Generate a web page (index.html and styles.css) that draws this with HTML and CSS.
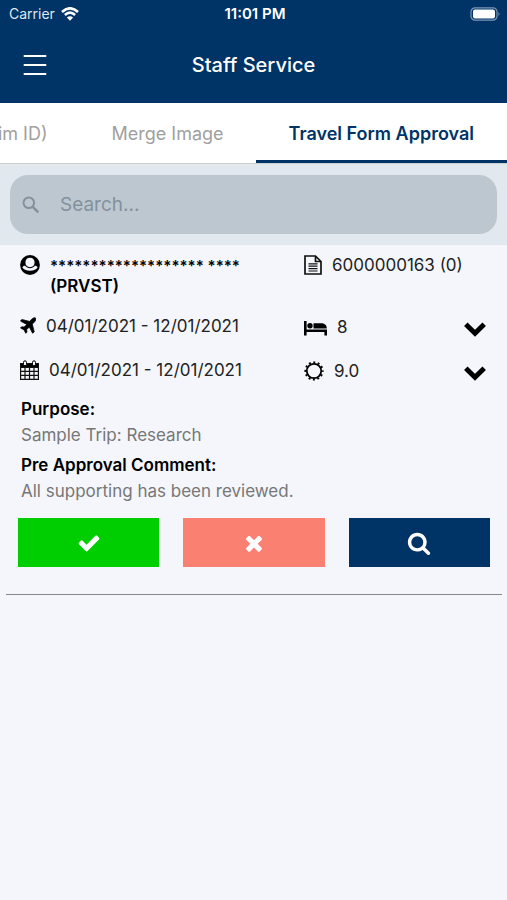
FILE: index.html
```html
<!DOCTYPE html>
<html lang="en">
<head>
<meta charset="utf-8">
<meta name="viewport" content="width=device-width, initial-scale=1">
<title>Staff Service</title>
<link rel="stylesheet" href="styles.css">
</head>
<body>
<header class="top">
  <div class="status">
    <div class="carrier">Carrier
      <svg width="18" height="14" viewBox="0 0 18 14" fill="none" stroke="#fff" stroke-width="2.6"><path d="M1 5Q9-2.4 17 5M3.900 8Q9 3.300 14.100 8"/><path d="M9 13.700 5.900 10.500Q9 7.900 12.100 10.500Z" fill="#fff" stroke="none"/></svg>
    </div>
    <div class="clock">11:01 PM</div>
    <svg class="battery" width="31" height="14" viewBox="0 0 31 14"><rect x="1" y=".8" width="26" height="12.400" rx="4" fill="none" stroke="#7d97b4" stroke-width="1.200"/><rect x="3" y="2.600" width="22" height="8.800" rx="2" fill="#fff"/><path d="M28.500 5q2 2 0 4z" fill="#7d97b4"/></svg>
  </div>
  <div class="bar">
    <button class="menu" aria-label="Menu"><svg width="24" height="22" viewBox="0 0 24 22" stroke="#fff" stroke-width="2" stroke-linecap="round"><path d="M1.500 2H22.500M1.500 11H22.500M1.500 20H22.500"/></svg></button>
    <h1>Staff Service</h1>
  </div>
</header>
<nav class="tabs">
  <a href="#claim">im ID)</a>
  <a href="#merge">Merge Image</a>
  <a href="#travel" class="active" aria-current="page">Travel Form Approval</a>
</nav>
<div class="search-area">
  <label class="search">
    <svg width="18" height="18" viewBox="0 0 18 18" fill="none" stroke="#84919c" stroke-width="2"><circle cx="6.800" cy="6.800" r="5.300"/><path d="m10.800 10.800 5.500 5.500" stroke-width="2.600"/></svg>
    <input type="search" placeholder="Search..." aria-label="Search">
  </label>
</div>
<main>
  <article class="card">
    <div class="row first">
      <div class="cell">
        <svg width="20" height="20" viewBox="0 0 20 20"><circle cx="10" cy="10" r="9.900"/><path d="M10 2.800c-2.800 0-4.600 2-4.600 4.800S7.300 12.300 10 12.300s4.600-1.900 4.600-4.700-1.800-4.800-4.600-4.800Z" fill="#f4f6fb"/><path d="M2.400 12.200c.8-1 1.600-1.400 2.700-1.400 1.200 1.600 2.900 2.500 4.900 2.500s3.700-.9 4.900-2.500c1.100 0 1.900.4 2.700 1.400-.9 2.100-3.900 3.600-7.600 3.600s-6.700-1.500-7.600-3.600Z" fill="#f4f6fb"/></svg>
        <strong><span class="masked">******************* ****</span><br>(PRVST)</strong>
      </div>
      <div class="cell"><svg width="18" height="20" viewBox="0 0 18 20" fill="none" stroke="#111"><path d="M1 1H11.500L17 6.500V19H1ZM11.500 1V6.500H17" stroke-width="1.700"/><path d="M4.500 8.800H13.500M4.500 11.200H13.500M4.500 13.600H13.500M4.500 16H13.500" stroke-width="1.200"/></svg><span>6000000163 (0)</span></div>
    </div>
    <div class="row">
      <div class="cell"><svg width="16" height="18" viewBox="0 -1.500 16 18"><path d="M15.500.5c.8.900 0 2.800-1.100 4l-2.100 2.100 1.900 7.800-1.600 1.300-3.300-6.200-2.700 2.600.4 2.500-1.200 1.200-1.800-3.500L.5 10.500l1.200-1.200 2.500.3 2.600-2.700L.5 3.600 1.800 2l7.800 1.900 2.100-2.200C12.800.6 14.700-.2 15.500.5Z" stroke="#000" stroke-width=".8"/></svg><span>04/01/2021 - 12/01/2021</span></div>
      <div class="cell offset"><svg width="23" height="20" viewBox="0 -3 23 20"><path d="M0 1H2.600V9.500H23V15.500H20.400V12H2.600V15.500H0Z"/><circle cx="6" cy="5.800" r="2.700"/><path d="M9.500 3.200H18.500Q22.800 4 22.800 8.500H9.500Z"/></svg><span>8</span></div>
      <button class="expand" aria-label="Expand travel days"><svg width="22" height="15" viewBox="0 0 22 15" fill="none" stroke="#000" stroke-width="5"><path d="m1.800 2.300 9.200 8.900 9.200-8.900"/></svg></button>
    </div>
    <div class="row last">
      <div class="cell"><svg width="19" height="20" viewBox="0 0 19 20"><path d="M0 3H19V7.500H0Z"/><path d="M.6 3.500H18.400V19.400H.6ZM.6 7.500H18.400M.6 11.400H18.400M.6 15.400H18.400M5 7V19M9.500 7V19M14 7V19" fill="none" stroke="#111" stroke-width="1.200"/><rect x="3.500" y=".8" width="3" height="5" rx="1.500" fill="#f4f6fb" stroke="#000"/><rect x="12.500" y=".8" width="3" height="5" rx="1.500" fill="#f4f6fb" stroke="#000"/></svg><span>04/01/2021 - 12/01/2021</span></div>
      <div class="cell offset"><svg width="20" height="20" viewBox="0 0 20 20" fill="none" stroke="#000"><circle cx="10" cy="10" r="7.200" stroke-width="1.800"/><circle cx="10" cy="10" r="8.600" stroke-width="2" stroke-dasharray="2 2.503" stroke-dashoffset="1"/></svg><span>9.0</span></div>
      <button class="expand" aria-label="Expand calendar days"><svg width="22" height="15" viewBox="0 0 22 15" fill="none" stroke="#000" stroke-width="5"><path d="m1.800 2.300 9.200 8.900 9.200-8.900"/></svg></button>
    </div>
    <dl>
      <dt>Purpose:</dt><dd>Sample Trip: Research</dd>
      <dt>Pre Approval Comment:</dt><dd>All supporting has been reviewed.</dd>
    </dl>
    <div class="actions">
      <button class="approve" aria-label="Approve"><svg width="24" height="24" viewBox="0 0 1792 1792"><path d="M1671 566q0 40-28 68l-724 724-136 136q-28 28-68 28t-68-28l-136-136-362-362q-28-28-28-68t28-68l136-136q28-28 68-28t68 28l294 295 656-657q28-28 68-28t68 28l136 136q28 28 28 68z"/></svg></button>
      <button class="reject" aria-label="Reject"><svg width="24" height="24" viewBox="0 0 1792 1792"><path d="M1490 1322q0 40-28 68l-136 136q-28 28-68 28t-68-28l-294-294-294 294q-28 28-68 28t-68-28l-136-136q-28-28-28-68t28-68l294-294-294-294q-28-28-28-68t28-68l136-136q28-28 68-28t68 28l294 294 294-294q28-28 68-28t68 28l136 136q28 28 28 68t-28 68l-294 294 294 294q28 28 28 68z"/></svg></button>
      <button class="view" aria-label="View details"><svg width="24" height="24" viewBox="0 0 1792 1792"><path d="M1216 832q0-185-131.500-316.500t-316.500-131.500-316.500 131.500-131.500 316.500 131.500 316.500 316.500 131.500 316.500-131.500 131.500-316.500zm512 832q0 52-38 90t-90 38q-54 0-90-38l-343-342q-179 124-399 124-143 0-273.500-55.500t-225-150-150-225-55.500-273.500 55.500-273.500 150-225 225-150 273.500-55.500 273.500 55.500 225 150 150 225 55.500 273.500q0 220-124 399l343 343q37 37 37 90z"/></svg></button>
    </div>
  </article>
</main>
</body>
</html>
```
FILE: styles.css
```css
* { box-sizing: border-box; }
body { margin: 0; background: #f4f6fb; color: #222; font: 17px/21px Inter, "Liberation Sans", sans-serif; }
button { border: 0; padding: 0; background: none; cursor: pointer; }
svg { display: block; flex: none; }
.top { background: #003366; color: #fff; }
.status { display: grid; grid-template-columns: 1fr auto 1fr; align-items: center; height: 27px; padding: 0 6px 0 9px; font-size: 14px; }
.carrier { display: flex; align-items: center; gap: 6px; color: #dfe7ef; }
.clock { font-size: 15px; font-weight: 600; }
.battery { justify-self: end; }
.bar { display: grid; grid-template-columns: 1fr auto 1fr; align-items: center; height: 76px; padding: 0 23px; }
.menu { justify-self: start; }
h1 { margin: 0; font-size: 20px; font-weight: 500; }
.tabs { display: flex; justify-content: flex-end; height: 61px; overflow: hidden; background: #fff; border-bottom: 1px solid #c9ced3; }
.tabs a { flex: none; display: flex; align-items: center; padding: 3px 32px 0; border-bottom: 3px solid transparent; color: #a0a0a0; text-decoration: none; font-size: 18px; }
.tabs .active { padding: 3px 33px 0; color: #003366; border-color: #003366; font-weight: 600; }
.search-area { padding: 11px 10px; background: #e1e8ee; }
.search { display: flex; align-items: center; gap: 20px; height: 59px; padding: 0 12px; border-radius: 18px; background: #bcc7d0; }
.search input { flex: 1; min-width: 0; border: 0; padding: 0; outline: 0; background: none; font: inherit; font-size: 19px; }
.search input::placeholder { color: #84919c; opacity: 1; }
.card { margin: 0 5px 0 6px; padding: 10px 12px 27px; border-bottom: 1px solid #85888f; }
.row { display: grid; grid-template-columns: 284px 1fr auto; height: 44px; padding: 0 4px 0 2px; }
.row.first { height: 61px; }
.row.last { height: 38px; }
.cell { display: flex; align-items: flex-start; gap: 10px; }
.cell.offset { padding-top: 1px; }
strong { color: #000; font-weight: 600; }
.masked { font-size: 15px; }
.expand { height: 21px; display: flex; align-items: flex-end; }
dl { margin: 0 3px; }
dt { color: #000; font-weight: 600; line-height: 22px; }
dd { margin: 0 0 8px; padding-top: 5px; color: #777; }
.actions { display: grid; grid-template-columns: repeat(3, 1fr); gap: 24px; padding-top: 8px; }
.actions button { display: grid; place-items: center; height: 49px; }
.actions svg { fill: #fff; }
.actions .approve { background: #00ce00; }
.actions .reject { background: #fa8072; }
.actions .view { background: #003366; }
```
